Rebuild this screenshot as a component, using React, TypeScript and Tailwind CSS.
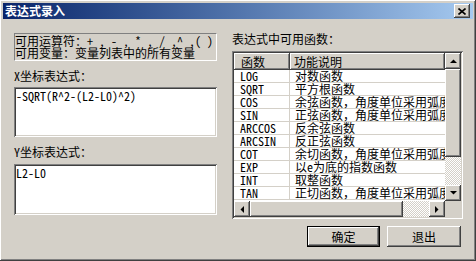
import React from "react";

const raised =
  "shadow-[inset_-1px_-1px_#404040,inset_1px_1px_#ffffff,inset_-2px_-2px_#808080,inset_2px_2px_#d4d0c8]";
const sunken =
  "shadow-[inset_1px_1px_#808080,inset_-1px_-1px_#ffffff,inset_2px_2px_#404040,inset_-2px_-2px_#d4d0c8]";
const dither =
  "bg-[image:repeating-conic-gradient(#d4d0c8_0_25%,#ffffff_0_50%)] bg-[length:2px_2px]";

function Arrow({ dir }: { dir: "up" | "down" | "left" | "right" }) {
  const pts: Record<string, string> = {
    up: "0,4 7,4 3.5,0.5",
    down: "0,0 7,0 3.5,3.5",
    left: "4,0 4,7 0.5,3.5",
    right: "0,0 0,7 3.5,3.5",
  };
  const vert = dir === "up" || dir === "down";
  return (
    <svg width={vert ? 7 : 4} height={vert ? 4 : 7} viewBox={vert ? "0 0 7 4" : "0 0 4 7"}>
      <polygon points={pts[dir]} fill="#000" />
    </svg>
  );
}

function SBtn({ dir }: { dir: "up" | "down" | "left" | "right" }) {
  return (
    <div className={`w-[16px] h-[16px] shrink-0 bg-[#d4d0c8] flex items-center justify-center ${raised}`}>
      <Arrow dir={dir} />
    </div>
  );
}

const rows: [string, string][] = [
  ["LOG", "对数函数"],
  ["SQRT", "平方根函数"],
  ["COS", "余弦函数，角度单位采用弧度"],
  ["SIN", "正弦函数，角度单位采用弧度"],
  ["ARCCOS", "反余弦函数"],
  ["ARCSIN", "反正弦函数"],
  ["COT", "余切函数，角度单位采用弧度"],
  ["EXP", "以e为底的指数函数"],
  ["INT", "取整函数"],
  ["TAN", "正切函数，角度单位采用弧度"],
];

export default function App() {
  return (
    <div
      className={`w-[476px] h-[261px] bg-[#d4d0c8] p-[3px] flex flex-col text-[12px] leading-[12px] text-black font-['Noto_Sans_Mono_CJK_SC','Noto_Sans_CJK_SC','Liberation_Mono',monospace] ${raised}`}
    >
      {/* Title bar */}
      <div className="h-[16px] shrink-0 bg-gradient-to-r from-[#0a246a] to-[#a6caf0] flex items-center justify-between pl-[2px] pr-[3px]">
        <span className="text-white font-bold text-[12px] leading-[12px] font-['Noto_Sans_CJK_SC',sans-serif]">
          表达式录入
        </span>
        <div className={`w-[16px] h-[14px] bg-[#d4d0c8] flex items-center justify-center ${raised}`}>
          <svg width="8" height="7" viewBox="0 0 8 7">
            <path d="M0.5 0.5 L7.5 6.5 M7.5 0.5 L0.5 6.5" stroke="#000" strokeWidth="1.6" />
          </svg>
        </div>
      </div>

      {/* Body */}
      <div className="flex flex-1 pl-[11px] pr-[10px] pt-[14px] gap-[15px]">
        {/* Left column */}
        <div className="w-[203px] flex flex-col">
          <div className="h-[28px] border-t border-l border-t-[#808080] border-l-[#808080] border-b border-r border-b-white border-r-white pl-[0px] pt-[1px]">
            <div className="h-[12px] whitespace-pre">可用运算符：+ , - , * , / ,^ ,( )</div>
            <div className="h-[12px] whitespace-pre">可用变量：变量列表中的所有变量</div>
          </div>
          <div className="mt-[9px] h-[12px]">X坐标表达式：</div>
          <div className={`mt-[5px] h-[50px] bg-white pl-[2px] pt-[3px] ${sunken}`}>
            <div className="h-[12px] whitespace-pre">-SQRT(R^2-(L2-L0)^2)</div>
          </div>
          <div className="mt-[9px] h-[12px]">Y坐标表达式：</div>
          <div className={`mt-[6px] h-[51px] bg-white pl-[2px] pt-[3px] ${sunken}`}>
            <div className="h-[12px] whitespace-pre">L2-L0</div>
          </div>
        </div>

        {/* Right column */}
        <div className="w-[231px] flex flex-col">
          <div className="h-[12px]">表达式中可用函数：</div>
          <div className={`mt-[6px] h-[168px] p-[2px] bg-white flex flex-col ${sunken}`}>
            <div className="h-[148px] flex">
              <div className="flex-1 flex flex-col overflow-hidden">
                <div className="h-[17px] shrink-0 flex bg-[#d4d0c8]">
                  <div className={`w-[56px] shrink-0 h-full flex items-center pl-[7px] ${raised}`}>函数</div>
                  <div className={`flex-1 h-full flex items-center pl-[4px] ${raised}`}>功能说明</div>
                </div>
                {rows.map(([a, b]) => (
                  <div key={a} className="h-[13px] shrink-0 flex border-b border-[#d4d0c8]">
                    <div className="w-[56px] shrink-0 pl-[6px] border-r border-[#d4d0c8] flex items-center">{a}</div>
                    <div className="flex-1 pl-[5px] whitespace-nowrap flex items-center">{b}</div>
                  </div>
                ))}
              </div>
              <div className="w-[16px] shrink-0 flex flex-col">
                <SBtn dir="up" />
                <div className={`h-[88px] bg-[#d4d0c8] ${raised}`} />
                <div className={`flex-1 ${dither}`} />
                <SBtn dir="down" />
              </div>
            </div>
            <div className="h-[16px] flex">
              <SBtn dir="left" />
              <div className={`w-[153px] bg-[#d4d0c8] ${raised}`} />
              <div className={`flex-1 ${dither}`} />
              <SBtn dir="right" />
              <div className="w-[16px] bg-[#d4d0c8]" />
            </div>
          </div>
          <div className="mt-[7px] flex justify-end gap-[7px] pr-[2px]">
            <div className="w-[73px] h-[21px] border border-black">
              <div className={`w-full h-full flex items-center justify-center ${raised}`}>确定</div>
            </div>
            <div className={`w-[74px] h-[21px] flex items-center justify-center ${raised}`}>退出</div>
          </div>
        </div>
      </div>
    </div>
  );
}
